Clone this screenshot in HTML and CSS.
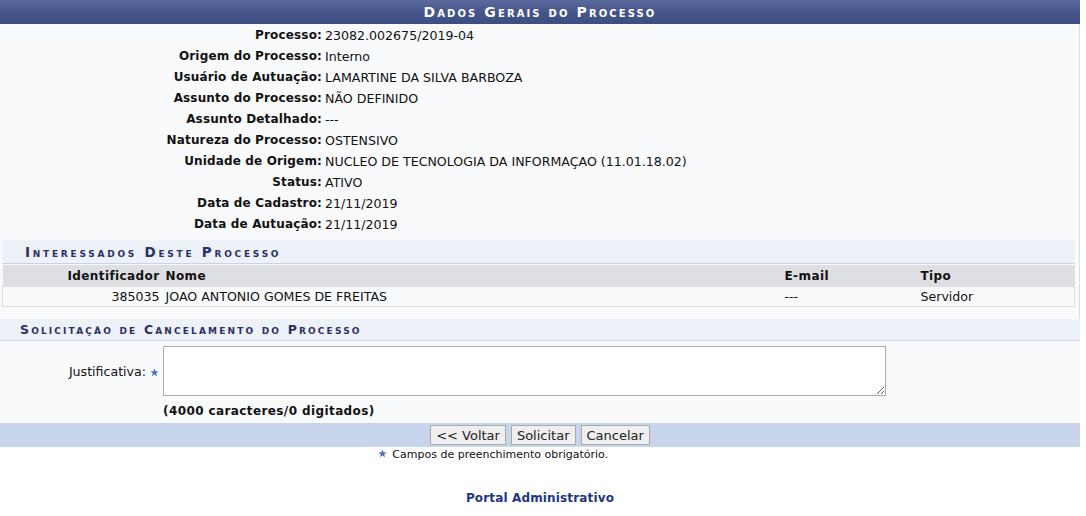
FILE: index.html
```html
<!DOCTYPE html>
<html lang="pt-BR">
<head>
    <meta charset="UTF-8">
    <title>Cancelamento de Processo</title>
    <link rel="stylesheet" href="styles.css">
</head>
<body>

<div class="formulario">
    <div class="caption">Dados Gerais do Processo</div>

    <div class="dados">
        <div class="campo">Processo:</div><div class="valor">23082.002675/2019-04</div>
        <div class="campo">Origem do Processo:</div><div class="valor">Interno</div>
        <div class="campo">Usuário de Autuação:</div><div class="valor">LAMARTINE DA SILVA BARBOZA</div>
        <div class="campo">Assunto do Processo:</div><div class="valor">NÃO DEFINIDO</div>
        <div class="campo">Assunto Detalhado:</div><div class="valor">---</div>
        <div class="campo">Natureza do Processo:</div><div class="valor">OSTENSIVO</div>
        <div class="campo">Unidade de Origem:</div><div class="valor">NUCLEO DE TECNOLOGIA DA INFORMAÇAO (11.01.18.02)</div>
        <div class="campo">Status:</div><div class="valor">ATIVO</div>
        <div class="campo">Data de Cadastro:</div><div class="valor">21/11/2019</div>
        <div class="campo">Data de Autuação:</div><div class="valor">21/11/2019</div>
    </div>

    <div class="interessados">
        <div class="subtitulo sub-interno">Interessados Deste Processo</div>
        <table class="listagem">
            <colgroup>
                <col class="col-id">
                <col class="col-nome">
                <col class="col-email">
                <col>
            </colgroup>
            <thead>
                <tr>
                    <th class="direita">Identificador</th>
                    <th>Nome</th>
                    <th>E-mail</th>
                    <th>Tipo</th>
                </tr>
            </thead>
            <tbody>
                <tr>
                    <td class="direita">385035</td>
                    <td>JOAO ANTONIO GOMES DE FREITAS</td>
                    <td>---</td>
                    <td>Servidor</td>
                </tr>
            </tbody>
        </table>
    </div>

    <div class="subtitulo sub-largo">Solicitação de Cancelamento do Processo</div>

    <div class="justificativa">
        <label class="rotulo" for="justificativa">Justificativa: <span class="obrigatorio"><svg width="9" height="9" viewBox="0 0 10 10"><path d="M5 0.6 L6.2 3.6 L9.5 3.8 L6.9 5.9 L7.8 9.2 L5 7.3 L2.2 9.2 L3.1 5.9 L0.5 3.8 L3.8 3.6 Z" fill="#4d70c8"/></svg></span></label>
        <textarea id="justificativa"></textarea>
        <div></div>
        <div class="contador">(4000 caracteres/0 digitados)</div>
    </div>

    <div class="rodape">
        <input type="button" value="<< Voltar">
        <input type="button" value="Solicitar">
        <input type="button" value="Cancelar">
    </div>
</div>

<p class="aviso"><svg width="9" height="9" viewBox="0 0 10 10"><path d="M5 0.6 L6.2 3.6 L9.5 3.8 L6.9 5.9 L7.8 9.2 L5 7.3 L2.2 9.2 L3.1 5.9 L0.5 3.8 L3.8 3.6 Z" fill="#4d70c8"/></svg> Campos de preenchimento obrigatório.</p>

<p class="portal">Portal Administrativo</p>

</body>
</html>
```

FILE: styles.css
```css
body {
    margin: 0;
    background-color: #fff;
    font-family: "DejaVu Sans", Verdana, sans-serif;
    font-size: 12px;
    color: #111;
}
.formulario {
    width: 1080px;
    background-color: #f9fafc;
}
.caption {
    height: 24px;
    line-height: 25px;
    text-align: center;
    color: #fff;
    font-weight: bold;
    font-size: 14px;
    font-variant: small-caps;
    letter-spacing: 2.1px;
    background: linear-gradient(#5b6a9c, #45558a 50%, #3e4e83);
}
.dados {
    display: grid;
    grid-template-columns: 322px 1fr;
    grid-auto-rows: 21px;
    column-gap: 3px;
    padding: 1px 0 3px 0;
    border-right: 1px solid #ddd;
}
.campo {
    text-align: right;
    font-weight: bold;
    letter-spacing: 0.15px;
    line-height: 21px;
}
.valor {
    font-size: 12.6px;
    line-height: 21px;
}
.interessados {
    padding: 2px 4px 12px 2px;
    border-right: 1px solid #ddd;
}
.subtitulo {
    height: 23px;
    line-height: 24px;
    background-color: #edf1f8;
    border-bottom: 1px solid #c6d3ea;
    color: #2b2f66;
    font-weight: bold;
    font-size: 13.5px;
    font-variant: small-caps;
    letter-spacing: 2.75px;
}
.sub-interno {
    padding-left: 23px;
    margin-bottom: 1px;
}
.sub-largo {
    height: 21px;
    line-height: 22px;
    font-size: 12.5px;
    letter-spacing: 2.15px;
    padding-left: 20px;
}
.listagem {
    width: 100%;
    border-collapse: collapse;
    table-layout: fixed;
}
.col-id { width: 160px; }
.col-nome { width: 619px; }
.col-email { width: 136px; }
.listagem th {
    background-color: #dedfe3;
    text-align: left;
    height: 21px;
    padding: 0 3px;
    letter-spacing: 0.4px;
}
.listagem td {
    height: 19px;
    padding: 0 3px;
    font-size: 12.6px;
    background-color: #f9fafc;
    border-top: 1px solid #ddd;
    border-bottom: 1px solid #ddd;
}
.listagem td:first-child { border-left: 1px solid #ddd; }
.listagem td:last-child { border-right: 1px solid #ddd; }
.listagem .direita { text-align: right; }
.justificativa {
    display: grid;
    grid-template-columns: 163px auto;
    padding-top: 5px;
    padding-bottom: 4px;
    justify-content: start;
}
.rotulo {
    align-self: center;
    text-align: right;
    font-size: 12.6px;
    padding-right: 4px;
}
.obrigatorio svg {
    vertical-align: -1px;
}
textarea {
    width: 717px;
    height: 44px;
    margin: 0;
    border: 1px solid #aaa;
    resize: both;
    font-family: "DejaVu Sans", Verdana, sans-serif;
    font-size: 12px;
}
.contador {
    font-weight: bold;
    letter-spacing: 0.4px;
    padding-top: 8px;
    line-height: 15px;
}
.rodape {
    background-color: #c8d4eb;
    height: 24px;
    display: flex;
    justify-content: center;
    align-items: center;
    gap: 5px;
}
input[type="button"] {
    height: 20px;
    padding: 0 5px;
    font-family: "DejaVu Sans", Verdana, sans-serif;
    font-size: 13px;
    color: #222;
    background-color: #efefef;
    border: 1px solid #aaa;
    border-radius: 0;
}
.aviso {
    margin: 1px 0 0 0;
    padding-right: 100px;
    text-align: center;
    font-size: 11px;
}
.aviso svg {
    vertical-align: 0;
    margin-right: 2px;
}
.portal {
    width: 1080px;
    margin: 30px 0 0 0;
    text-align: center;
    font-weight: bold;
    font-size: 12px;
    letter-spacing: 0.15px;
    color: #1c3783;
}
```
